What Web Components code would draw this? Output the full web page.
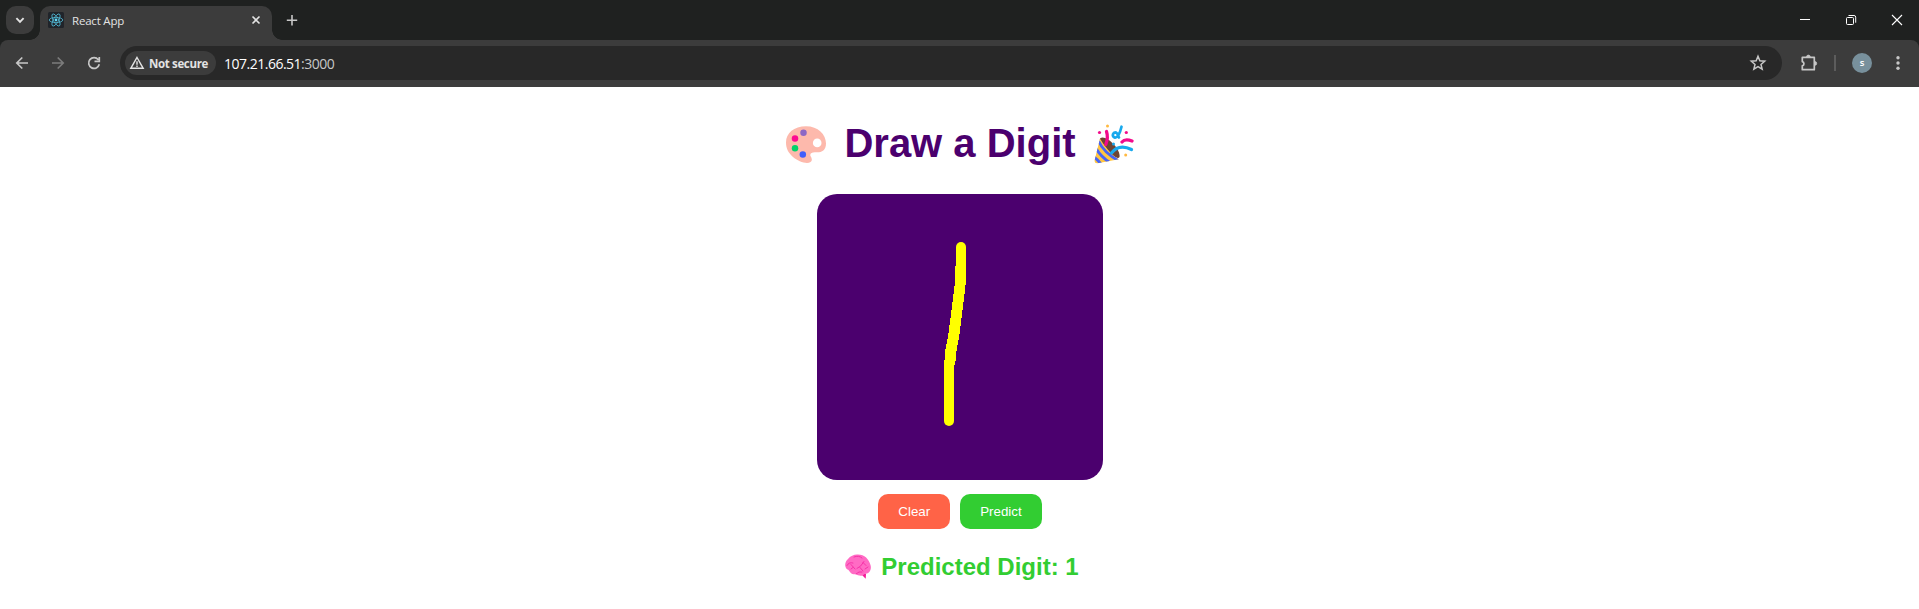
<!DOCTYPE html>
<html lang="en">
<head>
<meta charset="utf-8">
<title>React App</title>
<style>
html,body{margin:0;height:100%;background:#fff;overflow:hidden}
body{font-family:"Liberation Sans",Arial,sans-serif}
</style>
</head>
<body>
<browser-window>
  <tab-strip slot="tabs"><browser-tab>React App</browser-tab></tab-strip>
  <tool-bar slot="toolbar"><address-bar><span slot="chip">Not secure</span><span>107.21.66.51</span><span slot="port">:3000</span></address-bar></tool-bar>
  <digit-app></digit-app>
</browser-window>
<script>
function define(name, html) {
  const t = document.createElement('template');
  t.innerHTML = html;
  customElements.define(name, class extends HTMLElement {
    constructor() { super(); this.attachShadow({mode:'open'}).append(t.content.cloneNode(true)); }
  });
}

define('browser-window', `<style>
:host{display:flex;flex-direction:column;width:100%;height:100vh;background:#fff}
.page{flex:1;min-height:0}
</style><slot name="tabs"></slot><slot name="toolbar"></slot><div class="page"><slot></slot></div>`);

define('tab-strip', `<style>
:host{display:flex;height:40px;background:#1f2120;box-sizing:border-box;padding-left:6px}
.list{width:28px;height:28px;margin:6px 6px 0 0;border-radius:10px;background:#3c3c3c}
.plus{width:40px;height:40px}
.wins{margin-left:auto;display:flex}
svg{display:block}
</style>
<div class="list"><svg width="28" height="28" fill="none" stroke="#e3e3e3" stroke-width="1.9"><path d="M10.4 12.2 14 15.8 17.6 12.2"/></svg></div>
<slot></slot>
<svg class="plus" viewBox="0 0 40 40" stroke="#c7c7c7" stroke-width="1.6"><path d="M20 15v10.4M14.8 20.2h10.4"/></svg>
<div class="wins">
<svg width="46" height="40" stroke="#fff"><path d="M19 19.5h10"/></svg>
<svg width="46" height="40" fill="none" stroke="#fff"><rect x="19.5" y="17.5" width="7" height="7" rx="1"/><path d="M21.5 15.5H27a1.7 1.7 0 0 1 1.7 1.7v5.5"/></svg>
<svg width="46" height="40" stroke="#fff" stroke-width="1.1"><path d="m19 15 10 10M29 15 19 25"/></svg>
</div>`);

define('browser-tab', `<style>
:host{display:flex;align-items:center;position:relative;box-sizing:border-box;width:232px;height:34px;margin-top:6px;padding:0 8px;background:#3c3c3c;border-radius:10px 10px 0 0;color:#e3e3e3;font:11.5px/28px "Open Sans","Noto Sans",sans-serif}
:host::before,:host::after{content:"";position:absolute;bottom:0;width:10px;height:10px}
:host::before{left:-10px;background:radial-gradient(circle at 0 0,transparent 9.5px,#3c3c3c 10px)}
:host::after{right:-10px;background:radial-gradient(circle at 100% 0,transparent 9.5px,#3c3c3c 10px)}
.icon,.x{margin-bottom:6px}
.t{margin:0 0 4px 8px;letter-spacing:-.2px}
.x{margin-left:auto}
</style>
<svg class="icon" width="16" height="16"><rect width="16" height="16" rx="1.5" fill="#20242a"/><g fill="none" stroke="#4fb3ce" stroke-width=".85"><ellipse cx="8" cy="8" rx="6.8" ry="2.6"/><ellipse cx="8" cy="8" rx="6.8" ry="2.6" transform="rotate(60 8 8)"/><ellipse cx="8" cy="8" rx="6.8" ry="2.6" transform="rotate(120 8 8)"/></g><circle cx="8" cy="8" r="1.4" fill="#61dafb"/></svg>
<span class="t"><slot></slot></span>
<svg class="x" width="16" height="16" stroke="#e3e3e3" stroke-width="1.6"><path d="m4.5 4.5 7 7M11.500 4.500l-7 7"/></svg>`);

define('tool-bar', `<style>
:host{display:block;background:#1f2120}
.bar{display:flex;align-items:center;height:47px;background:#3c3c3c;border-radius:8px 8px 0 0;box-sizing:border-box;padding:0 3px 1px 4px}
svg{display:block;flex:none}
::slotted(address-bar){flex:1;margin-left:8px}
.sep{width:2px;height:16px;margin:0 16px 0 8px;background:#5c5c5c}
.av{width:20px;height:20px;border-radius:50%;background:#78909c;color:#fff;font:600 9.5px/19px "Open Sans",sans-serif;text-align:center}
</style>
<div class="bar">
<svg width="36" height="36" fill="none" stroke="#c7c7c7" stroke-width="1.7"><path d="M24 18H13M18.300 12.500 12.800 18l5.500 5.500"/></svg>
<svg width="36" height="36" fill="none" stroke="#7c7c7c" stroke-width="1.7"><path d="M12 18h11M17.700 12.500 23.200 18l-5.500 5.500"/></svg>
<svg width="36" height="36" fill="none" stroke="#c7c7c7" stroke-width="1.7"><path d="M22.300 14.700A5.400 5.400 0 1 0 23.300 19.300M23.300 12v4.300h-4.800"/></svg>
<slot></slot>
<svg width="44" height="36" fill="none" stroke="#c7c7c7" stroke-width="1.7"><path d="M20.500 12.300H32.300V24.700H20.300V20.800a2.100 2.100 0 0 0 0-4.100V12.300Z" stroke-linejoin="round"/><path d="M24.500 12a1.900 1.900 0 0 1 3.800 0ZM32.800 16.500a1.900 1.900 0 0 1 0 3.800Z" fill="#c7c7c7" stroke-width=".7"/></svg>
<div class="sep"></div><div class="av">s</div>
<svg width="44" height="36" fill="#c7c7c7"><circle cx="26" cy="12.800" r="1.700"/><circle cx="26" cy="18" r="1.700"/><circle cx="26" cy="23.200" r="1.700"/></svg>
</div>`);

define('address-bar', `<style>
:host{display:flex;align-items:center;height:34px;box-sizing:border-box;border-radius:17px;background:#282828;padding:0 15px 0 5px;color:#e3e3e3;font-family:"Open Sans","Noto Sans",sans-serif}
.chip{display:flex;align-items:center;width:91px;height:24px;border-radius:12px;background:#3c3c3c;box-sizing:border-box;padding-left:4px;font-size:11.500px;font-weight:700;letter-spacing:-.35px;white-space:nowrap}
.chip svg{margin-right:4px;flex:none}
.url{margin-left:8px;font-size:14px;letter-spacing:-.5px;color:#fff}
.port{color:#c7c7c7}
.star{margin-left:auto}
</style>
<div class="chip"><svg width="16" height="16" fill="none" stroke="#e3e3e3" stroke-width="1.400"><path d="M8 2.500 14.200 13.300H1.800Z"/><path d="M8 6.200v3.500M8 10.500v1.400"/></svg><slot name="chip"></slot></div>
<div class="url"><slot></slot><span class="port"><slot name="port"></slot></span></div>
<svg class="star" width="18" height="18" fill="none" stroke="#c7c7c7" stroke-width="1.500"><path d="m9 2.300 1.850 4.500 4.850.4-3.700 3.200 1.150 4.700L9 12.600l-4.150 2.500L6 10.400 2.300 7.200l4.850-.4Z"/></svg>`);

define('palette-icon', `<style>:host{display:block}svg{display:block}</style>
<svg width="40" height="38"><path d="M20 .2C32 .2 40 8.500 40 17.500C40 25 35 26.700 30 26.300C26 26 23.500 27.300 24.500 30C26 32 26.500 34.500 24.500 36C21 38.500 12 35.500 7 31C2 26.500 0 22 0 16.500C0 7 8 .2 20 .2Z" fill="#fdb9ac"/><circle cx="31.200" cy="16.900" r="4.300" fill="#fff"/><circle cx="17.500" cy="6.800" r="3.250" fill="#8c67c5"/><circle cx="9" cy="12.400" r="3.250" fill="#fc0a91"/><circle cx="9" cy="22.200" r="3.250" fill="#00d26a"/><circle cx="16.800" cy="28.600" r="3.250" fill="#415efb"/></svg>`);

define('party-icon', `<style>:host{display:block}svg{display:block}</style>
<svg width="40" height="40"><defs><clipPath id="c"><path d="M6 14.500C9 20 17 31 24.800 35.200L3.500 39.200Q-.2 39.500.8 35.500Z"/></clipPath></defs>
<path d="M6.500 14C12 10.500 27 25 25.500 33C23 38.500 2 18 6.500 14Z" fill="#6d4534"/><g clip-path="url(#c)"><path d="M-1 10h30v30H-1z" fill="#ffc540"/><g stroke="#4664f6" stroke-width="2.900" fill="none"><path d="M4.500 17Q10 29 25 37M2 24.500Q7 33 16.500 39M-1 32Q3 35 7 40"/></g></g>
<g fill="none" stroke-width="3.300" stroke-linecap="round"><path d="M12.500 7.500Q14.500 13.500 11.800 20.500" stroke="#f20b8b"/><path d="M28 18Q31 14.500 38 17" stroke="#f20b8b"/><path d="M17.500 29Q25 19.500 37.500 25.500" stroke="#18a9ed"/><path d="M27.500 2.700C26 9 23.500 14.500 20.500 13.500C17.500 12 19 8 22 8.500C24 9.500 24 12 25 13.500" stroke="#18a9ed" stroke-width="2.700"/></g><g fill="#f20b8b"><circle cx="5.500" cy="8.500" r="1.600"/><circle cx="32.300" cy="8.500" r="1.600"/></g><circle cx="19.500" cy="20" r="1.500" fill="#18a9ed"/><g fill="#ffb940"><circle cx="13.500" cy="2" r="1.500"/><circle cx="31.700" cy="31" r="1.500"/></g></svg>`);

define('brain-icon', `<style>:host{display:block}svg{display:block}</style>
<svg width="27" height="26"><path d="M15.500 19.500 21 19.500 20.700 24.700Z" fill="#f41a98"/><path d="M12 .5C19 0 24 5 25.500 11C27 16 24 20 19.500 20C17 23 13 21.500 10.500 20C5 21.500 5 16 2.500 15.500C-.8 13.500-.5 8 3 5C5 2 9 .5 12 .5Z" fill="#ff6bc4"/><g fill="none" stroke="#f52ba5" stroke-width=".9" stroke-linecap="round"><path d="M2 11.500Q4 7.700 8 9M6 10.500l4 4.500M12 14.500q4-1.500 7-7M18 8.500l3 3M18 17l-3-3.500M20 15l3-2M11 20l3-2h3M9 3q5-2 8 1M6 15l2-1.500"/></g></svg>`);

/* The drawn stroke: two round ends joined by a pixel-stepped body. */
define('draw-canvas', `<style>:host{display:block;width:286px;height:286px;border-radius:20px;background:#4b006e;overflow:hidden}svg{display:block}</style>
<svg width="286" height="286" fill="#ff0"><circle cx="144" cy="53" r="5"/><circle cx="132" cy="227" r="5"/><path shape-rendering="crispEdges" d="M139 53V72H138V92H137V100H136V108H135V116H134V124H133V131H132V139H131V145H130V150H129V155H128V166H127V227H137V171H138V167H139V157H140V151H141V146H142V140H143V132H144V124H145V116H146V108H147V100H148V91H149V53Z"/></svg>`);

define('app-button', `<style>:host{display:block}button{display:block;height:35px;margin:0;padding:0 20px;border:0;border-radius:10px;background:var(--fill);color:#fff;font:13.333px/35px "Liberation Sans",Arial,sans-serif}</style><button><slot></slot></button>`);

define('digit-app', `<style>
:host{display:flex;flex-direction:column;align-items:center;box-sizing:border-box;padding-top:33px}
h1,h2{display:flex;margin:0;white-space:nowrap;font-family:"Liberation Sans",Arial,sans-serif}
h1{height:46px;padding-left:1px;font-size:40px;line-height:46px;color:#4b006e}
h1 palette-icon{margin:6px 18px 0 0}h1 party-icon{margin:4px 0 0 18px}
draw-canvas{margin-top:28px}
.row{display:flex;gap:10px;margin-top:14px;padding-left:1px}
h2{height:28px;margin-top:24px;padding-left:5px;font-size:24px;line-height:28px;color:#32cd32}
h2 brain-icon{margin:1px 9px 0 0}
</style>
<h1><palette-icon></palette-icon><span>Draw a Digit</span><party-icon></party-icon></h1>
<draw-canvas></draw-canvas>
<div class="row"><app-button style="--fill:#ff6347">Clear</app-button><app-button style="--fill:#32cd32">Predict</app-button></div>
<h2><brain-icon></brain-icon><span>Predicted Digit: 1</span></h2>`);
</script>
</body>
</html>
